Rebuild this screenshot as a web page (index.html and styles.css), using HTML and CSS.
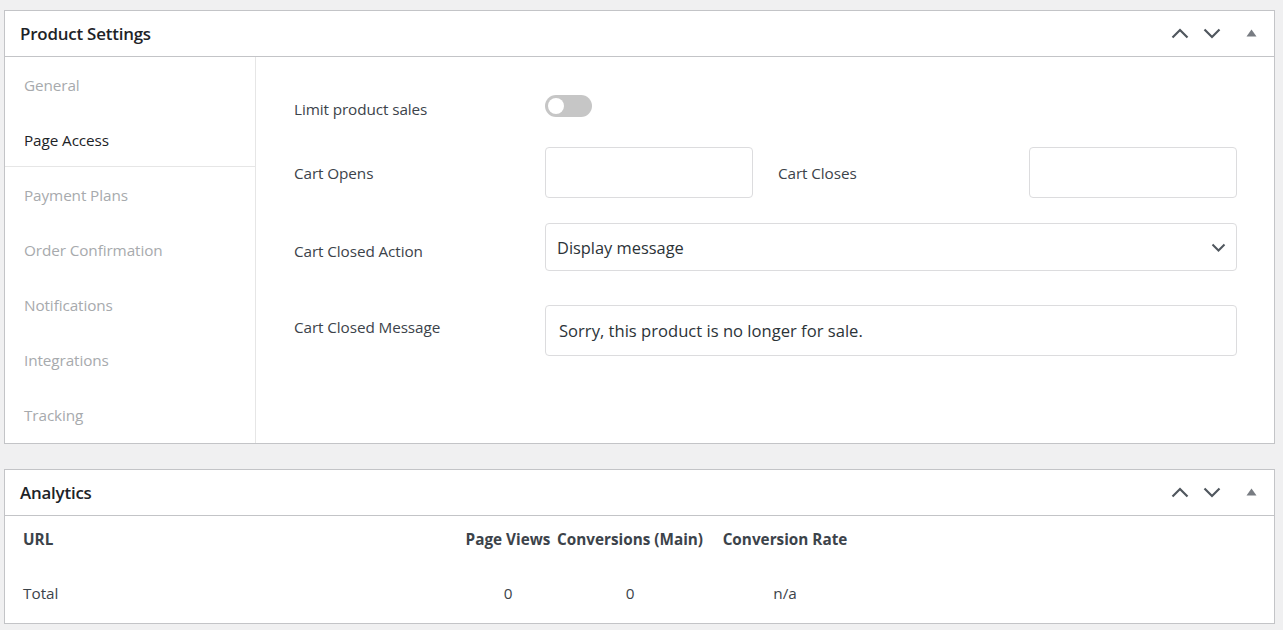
FILE: index.html
```html
<!DOCTYPE html>
<html lang="en">
<head>
<meta charset="utf-8">
<title>Product Settings</title>
<link rel="stylesheet" href="styles.css">
</head>
<body>
<div class="page">
  <section class="postbox">
    <header class="postbox-header">
      <h2 class="postbox-title">Product Settings</h2>
      <div class="handle-actions">
        <button class="handle-btn" aria-label="Move up"><svg width="18" height="11" viewBox="0 0 18 11"><path d="M1.5 9.5 L9 2 L16.5 9.5" fill="none" stroke="#50575e" stroke-width="2.2"/></svg></button>
        <button class="handle-btn" aria-label="Move down"><svg width="18" height="11" viewBox="0 0 18 11"><path d="M1.5 1.5 L9 9 L16.5 1.5" fill="none" stroke="#50575e" stroke-width="2.2"/></svg></button>
        <button class="handle-btn toggle-btn" aria-label="Toggle panel"><svg width="11" height="8" viewBox="0 0 11 8"><path d="M0.5 7.5 L5.5 0.5 L10.5 7.5 Z" fill="#787c82"/></svg></button>
      </div>
    </header>
    <div class="settings-body">
      <nav class="tabs">
        <div class="tab">General</div>
        <div class="tab active">Page Access</div>
        <div class="tab">Payment Plans</div>
        <div class="tab">Order Confirmation</div>
        <div class="tab">Notifications</div>
        <div class="tab">Integrations</div>
        <div class="tab">Tracking</div>
      </nav>
      <div class="tab-content">
        <div class="row row-limit">
          <label class="field-label label-low">Limit product sales</label>
          <span class="switch"><span class="knob"></span></span>
        </div>
        <div class="row row-dates">
          <label class="field-label">Cart Opens</label>
          <input class="text-input short" type="text">
          <label class="field-label second">Cart Closes</label>
          <input class="text-input short" type="text">
        </div>
        <div class="row row-action">
          <label class="field-label label-lower">Cart Closed Action</label>
          <div class="select">
            <span>Display message</span>
            <svg width="15" height="10" viewBox="0 0 15 10"><path d="M1.5 1.5 L7.5 7.5 L13.5 1.5" fill="none" stroke="#50575e" stroke-width="2"/></svg>
          </div>
        </div>
        <div class="row row-message">
          <label class="field-label label-high">Cart Closed Message</label>
          <div class="text-input wide">Sorry, this product is no longer for sale.</div>
        </div>
      </div>
    </div>
  </section>

  <section class="postbox analytics">
    <header class="postbox-header">
      <h2 class="postbox-title">Analytics</h2>
      <div class="handle-actions">
        <button class="handle-btn" aria-label="Move up"><svg width="18" height="11" viewBox="0 0 18 11"><path d="M1.5 9.5 L9 2 L16.5 9.5" fill="none" stroke="#50575e" stroke-width="2.2"/></svg></button>
        <button class="handle-btn" aria-label="Move down"><svg width="18" height="11" viewBox="0 0 18 11"><path d="M1.5 1.5 L9 9 L16.5 1.5" fill="none" stroke="#50575e" stroke-width="2.2"/></svg></button>
        <button class="handle-btn toggle-btn" aria-label="Toggle panel"><svg width="11" height="8" viewBox="0 0 11 8"><path d="M0.5 7.5 L5.5 0.5 L10.5 7.5 Z" fill="#787c82"/></svg></button>
      </div>
    </header>
    <div class="stats">
      <div class="cell th left">URL</div>
      <div class="cell th">Page Views</div>
      <div class="cell th">Conversions (Main)</div>
      <div class="cell th">Conversion Rate</div>
      <div class="cell th"></div>
      <div class="cell left">Total</div>
      <div class="cell">0</div>
      <div class="cell">0</div>
      <div class="cell">n/a</div>
      <div class="cell"></div>
    </div>
  </section>
</div>
</body>
</html>
```

FILE: styles.css
```css
* { box-sizing: border-box; }

html, body {
  margin: 0;
  padding: 0;
  background: #f0f0f1;
}

body {
  font-family: "Open Sans", "Noto Sans", "Liberation Sans", sans-serif;
  color: #3c434a;
  font-size: 15.3px;
}

.page {
  padding: 10px 8px 0 4px;
  display: flex;
  flex-direction: column;
  gap: 25px;
}

.postbox {
  background: #fff;
  border: 1px solid #c3c4c7;
}

.postbox-header {
  height: 46px;
  border-bottom: 1px solid #c3c4c7;
  display: flex;
  align-items: center;
  justify-content: space-between;
  padding: 0 0 0 15px;
}

.postbox-title {
  margin: 0;
  font-size: 16.9px;
  font-weight: 600;
  color: #1d2327;
  letter-spacing: -0.2px;
}

.handle-actions {
  display: flex;
  align-items: center;
  height: 100%;
}

.handle-btn {
  border: 0;
  background: none;
  padding: 0;
  width: 32px;
  height: 36px;
  display: flex;
  align-items: center;
  justify-content: center;
}

.toggle-btn {
  width: 46px;
  padding-bottom: 2px;
}

.settings-body {
  display: flex;
}

.tabs {
  width: 251px;
  flex: none;
  border-right: 1px solid #e6e6e6;
  display: flex;
  flex-direction: column;
  padding-bottom: 1px;
}

.tab {
  height: 55px;
  display: flex;
  align-items: center;
  padding-left: 19px;
  padding-top: 1px;
  font-size: 15.3px;
  color: #a7aaad;
  letter-spacing: -0.1px;
}

.tab.active {
  color: #1d2327;
  border-bottom: 1px solid #e6e6e6;
}

.tab-content {
  flex: 1;
  padding: 38px 39px 0 38px;
}

.row {
  display: flex;
  align-items: center;
}

.field-label {
  width: 251px;
  flex: none;
  font-size: 15.3px;
  color: #3c434a;
  letter-spacing: -0.1px;
}

.field-label.second {
  width: 251px;
  margin-left: 25px;
}

.label-low { padding-top: 6px; }
.label-lower { padding-top: 7px; }
.label-high { padding-bottom: 8px; }

.row-limit { height: 22px; margin-bottom: 30px; }
.row-dates { margin-bottom: 25px; }
.row-action { margin-bottom: 34px; }

.switch {
  width: 47px;
  height: 22px;
  border-radius: 11px;
  background: #c6c6c6;
  position: relative;
  display: inline-block;
}

.knob {
  position: absolute;
  left: 3px;
  top: 3px;
  width: 16px;
  height: 16px;
  border-radius: 50%;
  background: #fff;
}

.text-input {
  height: 51px;
  border: 1px solid #dcdcde;
  border-radius: 4px;
  background: #fff;
  font: inherit;
}

.text-input.short {
  width: 208px;
}

.text-input.wide {
  flex: 1;
  display: flex;
  align-items: center;
  padding-left: 13px;
  font-size: 16.6px;
  color: #2c3338;
}

.select {
  flex: 1;
  height: 48px;
  border: 1px solid #dcdcde;
  border-radius: 4px;
  display: flex;
  align-items: center;
  justify-content: space-between;
  padding: 0 10px 0 11px;
  font-size: 16.4px;
  color: #2c3338;
}

.select svg { margin-top: 1px; }

.stats {
  display: grid;
  grid-template-columns: 443px 92px 152px 158px 1fr;
  padding-left: 14px;
}

.cell {
  text-align: center;
  font-size: 15.3px;
  color: #3c434a;
  height: 54px;
  padding-top: 14px;
}

.cell.th {
  font-weight: 700;
  padding-top: 13px;
  height: 53px;
}

.cell.left {
  text-align: left;
  padding-left: 4px;
}
```
